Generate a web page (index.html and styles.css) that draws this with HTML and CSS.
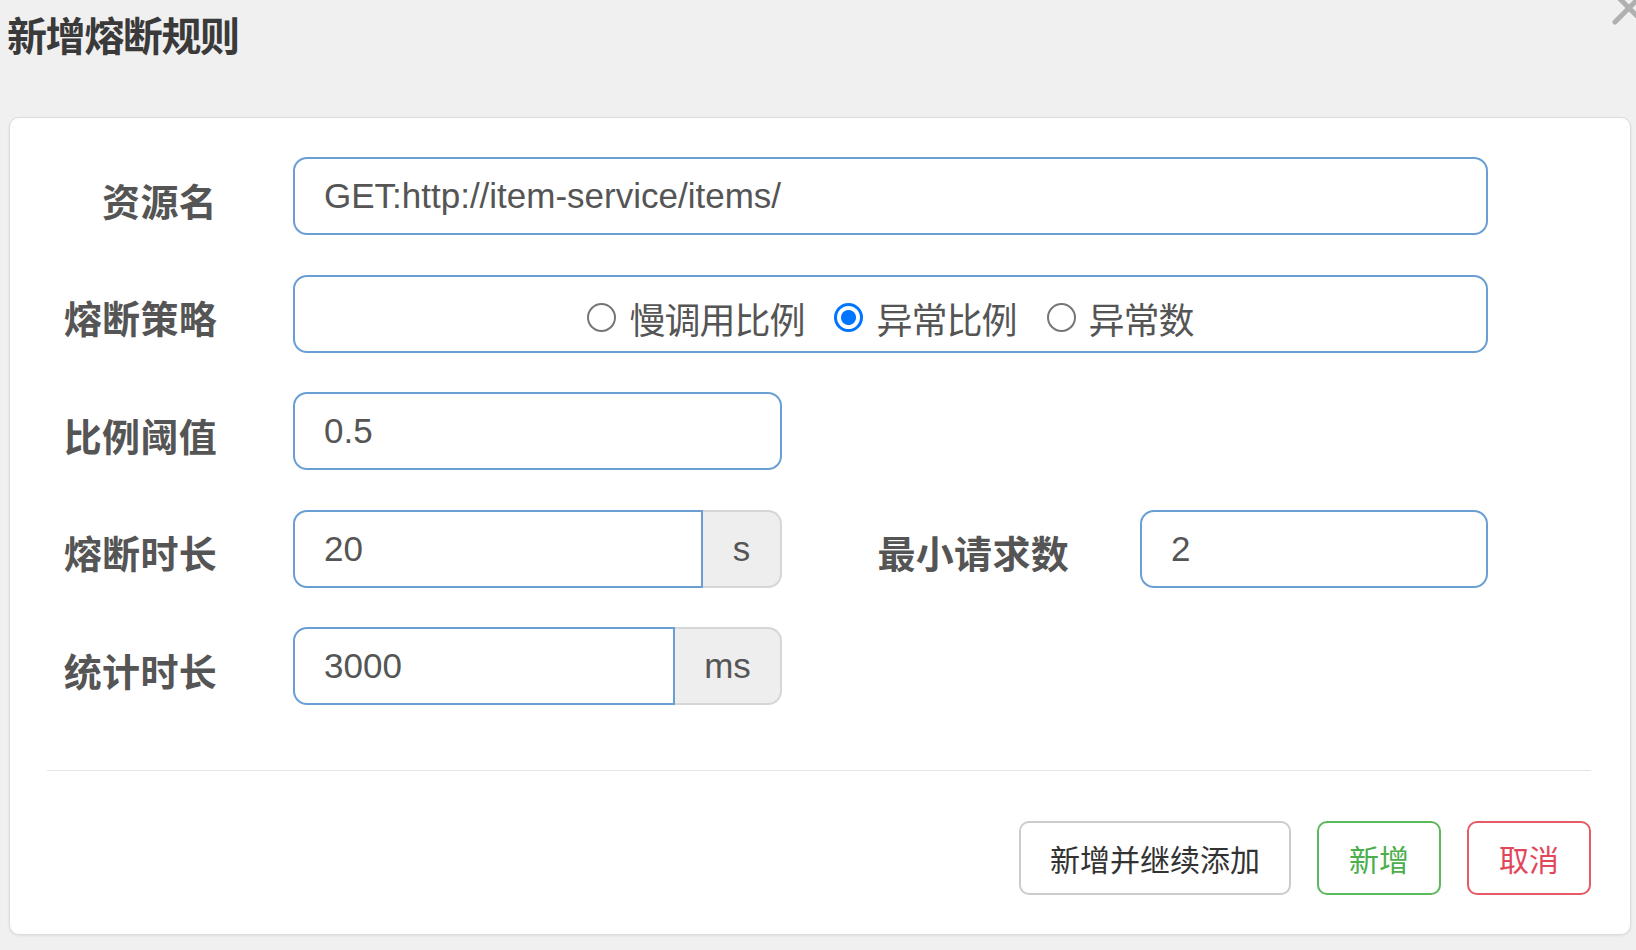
FILE: index.html
```html
<!DOCTYPE html>
<html lang="zh-CN">
<head>
<meta charset="utf-8">
<title>新增熔断规则</title>
<link rel="stylesheet" href="styles.css">
</head>
<body>
<div class="modal">
  <div class="modal-header">
    <h4 class="modal-title">新增熔断规则</h4>
    <span class="close" aria-label="关闭">
      <svg viewBox="0 0 44 44" width="44" height="44"><path d="M8 8 L36 36 M8 36 L36 8" stroke="#aaaaaa" stroke-width="5" stroke-linecap="round" fill="none"/></svg>
    </span>
  </div>
  <div class="card">
    <form class="form">
      <div class="row">
        <label class="label">资源名</label>
        <div class="control full"><div class="input">GET:http://item-service/items/</div></div>
      </div>
      <div class="row">
        <label class="label">熔断策略</label>
        <div class="control full">
          <div class="input radio-group">
            <span class="radio-item"><span class="radio"></span><span class="radio-text">慢调用比例</span></span>
            <span class="radio-item"><span class="radio checked"></span><span class="radio-text">异常比例</span></span>
            <span class="radio-item"><span class="radio"></span><span class="radio-text">异常数</span></span>
          </div>
        </div>
      </div>
      <div class="row">
        <label class="label">比例阈值</label>
        <div class="control half"><div class="input">0.5</div></div>
      </div>
      <div class="row">
        <label class="label">熔断时长</label>
        <div class="control half group">
          <div class="input grouped">20</div>
          <span class="addon addon-s">s</span>
        </div>
        <label class="label label2">最小请求数</label>
        <div class="control full"><div class="input">2</div></div>
      </div>
      <div class="row">
        <label class="label">统计时长</label>
        <div class="control half group">
          <div class="input grouped">3000</div>
          <span class="addon addon-ms">ms</span>
        </div>
      </div>
    </form>
    <div class="footer">
      <button class="btn btn-default wide" type="button">新增并继续添加</button>
      <button class="btn btn-success" type="button">新增</button>
      <button class="btn btn-danger" type="button">取消</button>
    </div>
  </div>
</div>
</body>
</html>
```

FILE: styles.css
```css
html, body {
  margin: 0;
  padding: 0;
}
body {
  width: 1636px;
  height: 950px;
  overflow: hidden;
  background: #f0f0f0;
  font-family: "Noto Sans CJK SC", "Liberation Sans", sans-serif;
  color: #555;
}
.modal {
  position: relative;
}
.modal-header {
  height: 117px;
  box-sizing: border-box;
  padding: 10px 0 0 7px;
}
.modal-title {
  margin: 0;
  font-size: 40px;
  line-height: 48px;
  font-weight: 700;
  letter-spacing: -1.4px;
  color: #3a3a3a;
}
.close {
  position: absolute;
  right: -15px;
  top: -14px;
  width: 44px;
  height: 44px;
  opacity: 0.9;
}
.close svg {
  display: block;
}
.card {
  margin-left: 9px;
  width: 1622px;
  height: 818px;
  box-sizing: border-box;
  background: #fff;
  border: 1px solid #dcdcdc;
  border-radius: 10px;
  box-shadow: 0 1px 3px rgba(0, 0, 0, 0.08);
  padding: 39px 39px 39px 37px;
}
.form {
  display: flex;
  flex-direction: column;
  gap: 39.5px;
  padding-right: 103px;
}
.row {
  display: flex;
  align-items: center;
  height: 78px;
}
.label {
  width: 170px;
  flex: none;
  margin-right: 76px;
  text-align: right;
  font-size: 38px;
  font-weight: 700;
  line-height: 48px;
  color: #555;
  padding-top: 7px;
  letter-spacing: 0.3px;
}
.label2 {
  width: 287px;
  margin-right: 71px;
}
.control {
  height: 78px;
  display: flex;
}
.control.full {
  flex: 1;
}
.control.half {
  width: 489px;
  flex: none;
}
.input {
  flex: 1;
  height: 78px;
  box-sizing: border-box;
  border: 2px solid #6a9fd4;
  border-radius: 14px;
  padding: 0 29px;
  display: flex;
  align-items: center;
  font-family: "Liberation Sans", "Noto Sans CJK SC", sans-serif;
  font-size: 35px;
  color: #555;
  background: #fff;
  white-space: nowrap;
}
.input.grouped {
  border-radius: 14px 0 0 14px;
}
.addon {
  flex: none;
  height: 78px;
  box-sizing: border-box;
  border: 2px solid #d6d6d6;
  border-left: none;
  border-radius: 0 14px 14px 0;
  background: #eeeeee;
  display: flex;
  align-items: center;
  justify-content: center;
  font-family: "Liberation Sans", sans-serif;
  font-size: 35px;
  color: #555;
}
.addon-s {
  width: 79px;
}
.addon-ms {
  width: 107px;
}
.radio-group {
  justify-content: center;
  padding-top: 8px;
  font-family: "Noto Sans CJK SC", sans-serif;
}
.radio-item {
  display: flex;
  align-items: center;
  margin: 0 15px;
}
.radio {
  width: 29px;
  height: 29px;
  box-sizing: border-box;
  border: 2px solid #767676;
  border-radius: 50%;
  background: #fff;
  margin-right: 13px;
  flex: none;
}
.radio.checked {
  border: 3px solid #0075ff;
  background: radial-gradient(circle, #0075ff 0 7px, #fff 8px);
}
.radio-text {
  font-size: 36px;
  line-height: 44px;
  letter-spacing: -1px;
  color: #555;
}
.footer {
  margin-top: 65px;
  border-top: 1px solid #e5e5e5;
  padding-top: 50px;
  display: flex;
  justify-content: flex-end;
  gap: 26px;
}
.btn {
  height: 74px;
  box-sizing: border-box;
  padding: 0 30px;
  border: 2px solid #cccccc;
  border-radius: 10px;
  background: #fff;
  font-family: "Noto Sans CJK SC", sans-serif;
  font-size: 30px;
  line-height: 1;
  color: #333;
  cursor: pointer;
}
.btn.wide {
  padding: 0 29px;
}
.btn-success {
  border-color: #5cb85c;
  color: #4cae4c;
}
.btn-danger {
  border-color: #e65a68;
  color: #e0475a;
}
```
